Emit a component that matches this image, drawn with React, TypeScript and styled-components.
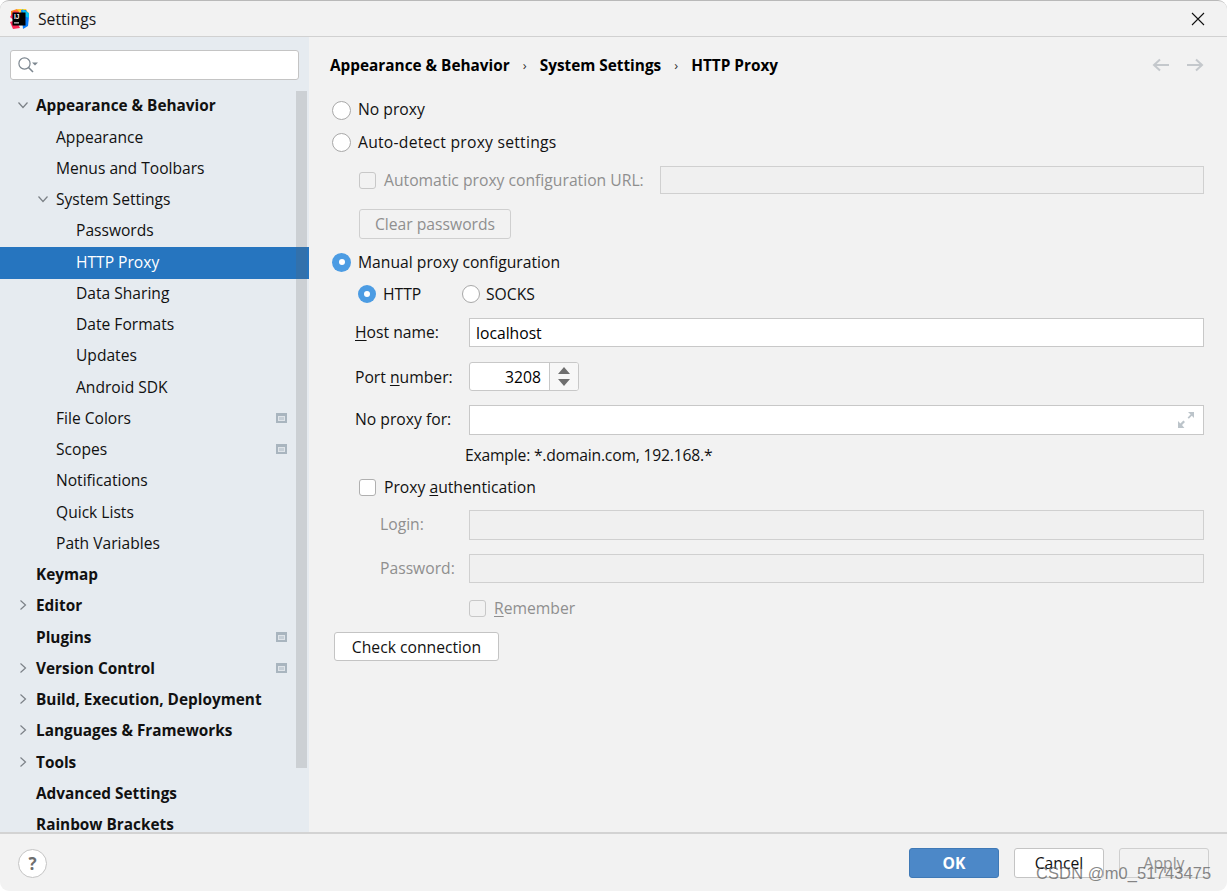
import React from "react";
import styled, { createGlobalStyle, css } from "styled-components";

const Global = createGlobalStyle`
  html, body { margin: 0; padding: 0; background: #fff; }
  body { font-family: "Open Sans", "Noto Sans", sans-serif; font-size: 15.7px; color: #000; }
`;
const Window = styled.div`
  position: relative; width: 1227px; height: 891px; display: flex; flex-direction: column;
  background: #f2f2f2; border-radius: 9px; overflow: hidden; box-sizing: border-box; border-top: 1px solid #b9b9b9;
`;
const TitleBar = styled.header`
  height: 36px; flex: none; display: flex; align-items: center; padding: 0 22px 0 9px; gap: 9px;
  border-bottom: 1px solid #d1d1d1; box-sizing: border-box;
`;
const Title = styled.span` flex: 1; font-size: 15.7px; color: #1a1a1a; `;
const Main = styled.div` flex: 1; min-height: 0; display: flex; `;
const Sidebar = styled.aside`
  position: relative; width: 309px; flex: none; background: #e6ebf0; overflow: hidden; padding-top: 13px; box-sizing: border-box;
`;
const SearchBox = styled.div`
  margin: 0 10px 9.8px 10px; height: 30px; box-sizing: border-box; background: #fff; border: 1px solid #c4c4c4; border-radius: 3px;
  display: flex; align-items: center; padding-left: 6px;
`;
const TreeRow = styled.div<{ $level: number; $selected?: boolean; $bold?: boolean }>`
  height: 31.25px; display: flex; align-items: center; box-sizing: border-box; padding-left: ${p => 16 + p.$level * 20}px;
  color: #111;
  font-weight: ${p => (p.$bold ? 700 : 400)};
  font-size: ${p => (p.$bold ? "15.35px" : "15.6px")};
  ${p => p.$selected && css`
    background: #2675bf; color: #fff; height: 32px; margin-top: 0.9px; margin-bottom: -1.65px; padding-bottom: 1px;
  `}
`;
const Arrow = styled.span` width: 20px; flex: none; display: flex; align-items: center; margin-left: 1px; margin-right: -1px; `;
const TreeLabel = styled.span` flex: 1; white-space: nowrap; `;
const ProjectMark = styled.span`
  width: 11px; height: 10px; box-sizing: border-box; margin-right: 22px; border: 2px solid #a9b5bf; background: #c5ced6; border-top-width: 3px;
  box-shadow: inset 0 0 0 1px #dfe4e9;
`;
const Scrollbar = styled.div`
  position: absolute; left: 296px; top: 54px; width: 11px; height: 677px; background: rgba(100, 100, 100, 0.2);
`;
const Panel = styled.main` flex: 1; min-width: 0; padding: 0 23px 0 23px; display: flex; flex-direction: column; `;
const Crumbs = styled.div`
  height: 57px; flex: none; display: flex; align-items: center; font-weight: 700; font-size: 15.35px; box-sizing: border-box; padding-bottom: 2px; margin-left: -2px;
`;
const CrumbSep = styled.span` width: 30px; text-align: center; font-weight: 400; font-size: 13px; color: #333; `;
const NavArrows = styled.span` margin-left: auto; display: flex; gap: 16px; `;
const Line = styled.div<{ $mt?: number; $h?: number; $ml?: number; $gap?: number }>`
  display: flex; align-items: center; height: ${p => p.$h ?? 32}px; margin-top: ${p => p.$mt ?? 0}px; margin-left: ${p => p.$ml ?? 0}px; gap: ${p => p.$gap ?? 7}px; flex: none;
`;
const RadioDot = styled.span<{ $on?: boolean; $size?: number }>`
  width: ${p => p.$size ?? 19}px; height: ${p => p.$size ?? 19}px; box-sizing: border-box; border-radius: 50%; flex: none; display: flex; align-items: center; justify-content: center;
  background: ${p => (p.$on ? "#4c9ce3" : "#fff")};
  border: ${p => (p.$on ? "none" : "1px solid #a8a8a8")};
  &::after { content: ""; display: ${p => (p.$on ? "block" : "none")}; width: 6px; height: 6px; border-radius: 50%; background: #fff; }
`;
const Check = styled.span<{ $off?: boolean }>`
  width: 17px; height: 17px; box-sizing: border-box; flex: none; border-radius: 3px; display: block;
  background: ${p => (p.$off ? "#f2f2f2" : "#fff")}; border: 1px solid ${p => (p.$off ? "#c8c8c8" : "#b0b0b0")};
`;
const Label = styled.span<{ $off?: boolean; $w?: number; $up?: boolean; $pl?: number; $ls?: number }>`
  color: ${p => (p.$off ? "#8f8f8f" : "#111")}; white-space: nowrap; box-sizing: border-box;
  ${p => (p.$w ? `width: ${p.$w}px; flex: none;` : "")}
  ${p => (p.$up ? "margin-bottom: 2px;" : "")}
  ${p => (p.$pl ? `padding-left: ${p.$pl}px;` : "")}
  ${p => (p.$ls ? `letter-spacing: ${p.$ls}px;` : "")}
`;
const U = styled.span` text-decoration: underline; text-underline-offset: 2px; `;
const TextField = styled.div<{ $off?: boolean; $ml?: number }>`
  flex: 1; height: 100%; box-sizing: border-box; border: 1px solid ${p => (p.$off ? "#d0d0d0" : "#c8c8c8")}; border-width: 1px 1.5px 1.5px 1px;
  background: ${p => (p.$off ? "#f0f0f0" : "#fff")}; display: flex; align-items: center; padding: 0 6px; min-width: 0;
  margin-left: ${p => p.$ml ?? 0}px;
`;
const Spinner = styled.div`
  width: 110px; height: 100%; box-sizing: border-box; border: 1px solid #c8c8c8; border-radius: 3px; display: flex; background: #fff; overflow: hidden; flex: none;
`;
const SpinValue = styled.span` flex: 1; text-align: right; padding-right: 8px; align-self: center; `;
const SpinButtons = styled.span`
  width: 28px; border-left: 1px solid #c8c8c8; background: #f7f7f7; display: flex; align-items: center; justify-content: center;
`;
const Button = styled.div<{ $w: number; $off?: boolean }>`
  width: ${p => p.$w}px; height: 100%; box-sizing: border-box; display: flex; align-items: center; justify-content: center; border-radius: 3px; flex: none;
  background: ${p => (p.$off ? "#f2f2f2" : "#fff")}; border: 1px solid ${p => (p.$off ? "#cfcfcf" : "#c4c4c4")}; color: ${p => (p.$off ? "#8f8f8f" : "#111")};
`;
const PrimaryButton = styled(Button)`
  background: #4c88c8; border-color: #3f79b6; color: #fff; font-weight: 700;
`;
const Footer = styled.footer`
  height: 59px; flex: none; border-top: 2px solid #d3d3d3; display: flex; align-items: center; box-sizing: border-box; padding: 1px 18px 0; gap: 15px;
`;
const Help = styled.div`
  width: 29px; height: 29px; border-radius: 50%; box-sizing: border-box; border: 1px solid #c4c4c4; background: #fff; display: flex; align-items: center; justify-content: center;
  font-weight: 700; font-size: 17px; color: #6e6e6e; margin-right: auto;
`;
const FooterButtons = styled.div` display: flex; height: 30px; gap: 15px; `;
const Watermark = styled.div`
  position: absolute; left: 1036px; top: 863px; font: 16.5px "Liberation Sans", sans-serif; letter-spacing: 0.1px; color: rgba(90, 90, 90, 0.72); white-space: nowrap;
`;

const Chevron = ({ open }: { open: boolean }) => (
  <svg width="12" height="12" viewBox="0 0 12 12" fill="none" stroke="#7c8187" strokeWidth="1.2">
    {open ? <path d="M1.5 3.5 6 8.5l4.5-5" /> : <path d="M3.5 1.5 8.5 6l-5 4.5" />}
  </svg>
);

const Logo = () => (
  <svg width="20" height="20" viewBox="0 0 20 20">
    <path d="M2 2 8 0l3 2-9 6z" fill="#fc801d" />
    <path d="M1 8 5 2l5 1-3 10z" fill="#fe2857" />
    <path d="M8 0h9l3 5-5 3z" fill="#ffcc2e" />
    <path d="M12 1h5l3 7-1 9-5 3z" fill="#087cfa" />
    <path d="M1 13 4 20l7-1-4-8z" fill="#fe2857" />
    <path d="M13 0 20 4v5l-5-2z" fill="#07c3f2" />
    <rect x="3.5" y="3.5" width="13" height="13" fill="#000" />
    <text x="5" y="9.6" fontSize="6.5" fontWeight="700" fontFamily="Liberation Sans" fill="#fff">IJ</text>
    <rect x="5" y="13.4" width="5" height="1" fill="#fff" />
  </svg>
);
const Close = () => (
  <svg width="14" height="14" viewBox="0 0 14 14" stroke="#111" strokeWidth="1.1"><path d="M1 1l12 12M13 1 1 13" /></svg>
);
const Search = () => (
  <svg width="22" height="18" viewBox="0 0 22 18" fill="none">
    <circle cx="7.5" cy="7.5" r="5.6" stroke="#7d8790" strokeWidth="1.2" />
    <path d="M11.5 11.5l4.5 4.5" stroke="#7d8790" strokeWidth="1.6" />
    <path d="M15 6.5h6l-3 3z" fill="#7d8790" />
  </svg>
);
const NavArrowIcon = styled.svg<{ $flip?: boolean }>`
  ${p => (p.$flip ? "transform: scaleX(-1);" : "")}
`;
const NavArrow = ({ flip }: { flip?: boolean }) => (
  <NavArrowIcon $flip={flip} width="18" height="14" viewBox="0 0 18 14" fill="none" stroke="#c4c8cc" strokeWidth="2">
    <path d="M17 7H2M8 1.5 2 7l6 5.5" />
  </NavArrowIcon>
);
const SpinIcon = () => (
  <svg width="12" height="19" viewBox="0 0 12 19" fill="#6f6f6f"><path d="M6 0l6 7H0zM0 12h12l-6 7z" /></svg>
);
const ExpandIcon = styled.svg` margin-left: auto; margin-right: 3px; `;
const Expand = () => (
  <ExpandIcon width="16" height="16" viewBox="0 0 16 16" fill="#bcc4ca">
    <path d="M10 0h6v6l-2.2-2.2-3 3-1.2-1.2 3-3zM0 16v-7l2.4 2.4 3-3 1.6 1.6-3 3L6.4 16z" />
  </ExpandIcon>
);

const tree: { t: string; l: number; b?: boolean; arrow?: "open" | "closed"; sel?: boolean; mark?: boolean }[] = [
  { t: "Appearance & Behavior", l: 0, b: true, arrow: "open" },
  { t: "Appearance", l: 1 },
  { t: "Menus and Toolbars", l: 1 },
  { t: "System Settings", l: 1, arrow: "open" },
  { t: "Passwords", l: 2 },
  { t: "HTTP Proxy", l: 2, sel: true },
  { t: "Data Sharing", l: 2 },
  { t: "Date Formats", l: 2 },
  { t: "Updates", l: 2 },
  { t: "Android SDK", l: 2 },
  { t: "File Colors", l: 1, mark: true },
  { t: "Scopes", l: 1, mark: true },
  { t: "Notifications", l: 1 },
  { t: "Quick Lists", l: 1 },
  { t: "Path Variables", l: 1 },
  { t: "Keymap", l: 0, b: true },
  { t: "Editor", l: 0, b: true, arrow: "closed" },
  { t: "Plugins", l: 0, b: true, mark: true },
  { t: "Version Control", l: 0, b: true, arrow: "closed", mark: true },
  { t: "Build, Execution, Deployment", l: 0, b: true, arrow: "closed" },
  { t: "Languages & Frameworks", l: 0, b: true, arrow: "closed" },
  { t: "Tools", l: 0, b: true, arrow: "closed" },
  { t: "Advanced Settings", l: 0, b: true },
  { t: "Rainbow Brackets", l: 0, b: true },
];

export default function App() {
  return (
    <>
      <Global />
      <Window>
        <TitleBar>
          <Logo />
          <Title>Settings</Title>
          <Close />
        </TitleBar>
        <Main>
          <Sidebar>
            <SearchBox><Search /></SearchBox>
            {tree.map(r => (
              <TreeRow key={r.t} $level={r.l} $selected={r.sel} $bold={r.b}>
                <Arrow>{r.arrow && <Chevron open={r.arrow === "open"} />}</Arrow>
                <TreeLabel>{r.t}</TreeLabel>
                {r.mark && <ProjectMark />}
              </TreeRow>
            ))}
            <Scrollbar />
          </Sidebar>
          <Panel>
            <Crumbs>
              <span>Appearance &amp; Behavior</span><CrumbSep>›</CrumbSep>
              <span>System Settings</span><CrumbSep>›</CrumbSep>
              <span>HTTP Proxy</span>
              <NavArrows><NavArrow /><NavArrow flip /></NavArrows>
            </Crumbs>
            <Line><RadioDot /><Label $up>No proxy</Label></Line>
            <Line><RadioDot /><Label $ls={0.24}>Auto-detect proxy settings</Label></Line>
            <Line $mt={8} $h={28} $ml={27} $gap={8}>
              <Check $off /><Label $off>Automatic proxy configuration URL:</Label>
              <TextField $off $ml={8} />
            </Line>
            <Line $mt={15} $h={30} $ml={27}><Button $w={152} $off>Clear passwords</Button></Line>
            <Line $mt={7}><RadioDot $on /><Label>Manual proxy configuration</Label></Line>
            <Line $ml={26} $gap={0}>
              <RadioDot $on $size={18} /><Label $w={86} $pl={7}>HTTP</Label>
              <RadioDot $size={18} /><Label $pl={6}>SOCKS</Label>
            </Line>
            <Line $mt={8} $h={29} $ml={23} $gap={0}>
              <Label $w={114} $up><U>H</U>ost name:</Label><TextField>localhost</TextField>
            </Line>
            <Line $mt={15} $h={29} $ml={23} $gap={0}>
              <Label $w={114}>Port <U>n</U>umber:</Label>
              <Spinner><SpinValue>3208</SpinValue><SpinButtons><SpinIcon /></SpinButtons></Spinner>
            </Line>
            <Line $mt={14} $h={30} $ml={23} $gap={0}>
              <Label $w={114} $up>No proxy for:</Label><TextField><Expand /></TextField>
            </Line>
            <Line $mt={10} $h={20} $ml={133}><Label $ls={-0.2}>Example: *.domain.com, 192.168.*</Label></Line>
            <Line $mt={8} $h={28} $ml={27} $gap={8}><Check /><Label>Proxy <U>a</U>uthentication</Label></Line>
            <Line $mt={9} $h={30} $ml={48} $gap={0}><Label $off $w={89} $up>Login:</Label><TextField $off /></Line>
            <Line $mt={14} $h={29} $ml={48} $gap={0}><Label $off $w={89} $up>Password:</Label><TextField $off /></Line>
            <Line $mt={11} $h={28} $ml={137} $gap={8}><Check $off /><Label $off><U>R</U>emember</Label></Line>
            <Line $mt={10} $h={29} $ml={2}><Button $w={165}>Check connection</Button></Line>
          </Panel>
        </Main>
        <Footer>
          <Help>?</Help>
          <FooterButtons>
            <PrimaryButton $w={90}>OK</PrimaryButton>
            <Button $w={90}>Cancel</Button>
            <Button $w={90} $off>Apply</Button>
          </FooterButtons>
        </Footer>
        <Watermark>CSDN @m0_51743475</Watermark>
      </Window>
    </>
  );
}
